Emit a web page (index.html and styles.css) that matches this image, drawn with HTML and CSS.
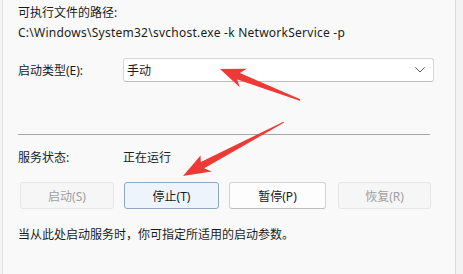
FILE: index.html
```html
<!DOCTYPE html>
<html lang="zh-CN">
<head>
<meta charset="utf-8">
<link rel="stylesheet" href="styles.css">
</head>
<body>
<div class="panel">
  <div class="line">可执行文件的路径:</div>
  <div class="line path">C:\Windows\System32\svchost.exe -k NetworkService -p</div>
  <div class="row startup">
    <div class="label">启动类型(E):</div>
    <div class="select">
      <span>手动</span>
      <svg class="chev" width="10" height="6" viewBox="0 0 10 6"><path d="M0.5 0.5 L5 5 L9.5 0.5" fill="none" stroke="#5a5a5a" stroke-width="1"/></svg>
    </div>
  </div>
  <div class="sep"></div>
  <div class="row status">
    <div class="label">服务状态:</div>
    <div>正在运行</div>
  </div>
  <div class="buttons">
    <div class="btn disabled">启动(S)</div>
    <div class="btn focus">停止(T)</div>
    <div class="btn normal">暂停(P)</div>
    <div class="btn disabled last">恢复(R)</div>
  </div>
  <div class="line hint">当从此处启动服务时，你可指定所适用的启动参数。</div>
</div>
<svg class="arrows" width="463" height="274" viewBox="0 0 463 274">
  <polygon fill="#ee3a36" points="220,69 246.9,68.7 239.9,72.9 300.3,99.3 299.7,100.7 237.3,79.5 239.7,87.3"/>
  <polygon fill="#ee3a36" points="183,176 200.5,155.5 200.8,162 283.4,121.7 284.2,122.5 204.2,168.2 211.5,171.5"/>
</svg>
</body>
</html>
```

FILE: styles.css
```css
html, body {
  margin: 0;
  padding: 0;
}
body {
  background: #f3f3f3;
  width: 463px;
  height: 274px;
  overflow: hidden;
  position: relative;
  font-family: "Segoe UI", "Noto Sans", "Noto Sans CJK SC", sans-serif;
  font-size: 12px;
  color: #1b1b1b;
}
.panel {
  margin-left: 2px;
  width: 454px;
  height: 274px;
  box-sizing: border-box;
  background: #f9f9f9;
  border-left: 1px solid #e2e2e2;
  border-right: 1px solid #dcdcdc;
  padding: 3px 0 0 15px;
}
.line {
  line-height: 20px;
  height: 20px;
  white-space: nowrap;
}
.path {
  letter-spacing: 0.25px;
}
.row {
  display: flex;
  align-items: center;
}
.label {
  width: 105px;
  flex: none;
}
.startup {
  margin-top: 15px;
  height: 24px;
}
.select {
  width: 311px;
  height: 24px;
  box-sizing: border-box;
  background: #ffffff;
  border: 1px solid #d6d6d6;
  border-bottom-color: #bdbdbd;
  border-radius: 3px;
  display: flex;
  align-items: center;
  justify-content: space-between;
  padding: 0 8px 0 3px;
}
.chev {
  display: block;
}
.sep {
  margin-top: 52px;
  width: 412px;
  height: 1px;
  background: #a6a6a6;
}
.status {
  margin-top: 13px;
  height: 20px;
  line-height: 20px;
}
.buttons {
  margin-top: 14px;
  margin-left: 2px;
  display: grid;
  grid-template-columns: 94px 95px 97px 95px;
  column-gap: 10px;
}
.btn {
  height: 27px;
  box-sizing: border-box;
  border-radius: 3px;
  display: flex;
  align-items: center;
  justify-content: center;
  border: 1px solid #e3e3e3;
}
.btn.last {
  margin-left: 2px;
}
.disabled {
  background: #f6f6f6;
  color: #a0a0a0;
  border-color: #e6e6e6;
}
.focus {
  background: #eef4fb;
  border-color: #8ea8c4;
}
.normal {
  background: #fdfdfd;
  border-color: #d3d3d3;
  border-bottom-color: #bcbcbc;
}
.hint {
  margin-top: 16px;
}
.arrows {
  position: absolute;
  left: 0;
  top: 0;
  pointer-events: none;
}
```
